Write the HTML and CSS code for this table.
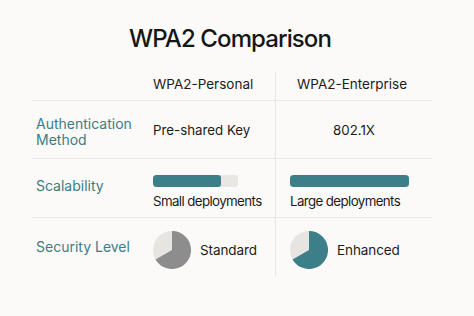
FILE: index.html
```html
<!DOCTYPE html>
<html>
<head>
<meta charset="utf-8">
<link rel="stylesheet" href="styles.css">
</head>
<body>
<div class="page">
  <h1 class="title">WPA2 Comparison</h1>
  <div class="table">
    <div class="cell head label"></div>
    <div class="cell head c1">WPA2-Personal</div>
    <div class="cell head c2 center">WPA2-Enterprise</div>

    <div class="cell row label"><span>Authentication<br>Method</span></div>
    <div class="cell row c1 auth">Pre-shared Key</div>
    <div class="cell row c2 center auth">802.1X</div>

    <div class="cell row label scal-label">Scalability</div>
    <div class="cell row c1 scal">
      <div class="bar small"><div class="fill" style="width:80%"></div></div>
      <div class="cap">Small deployments</div>
    </div>
    <div class="cell row c2 scal ent">
      <div class="bar large"><div class="fill" style="width:100%"></div></div>
      <div class="cap">Large deployments</div>
    </div>

    <div class="cell last label sec-label">Security Level</div>
    <div class="cell last c1 sec">
      <svg class="pie" viewBox="0 0 38 38" width="38" height="38">
        <circle cx="19" cy="19" r="19" fill="#e6e5e2"/>
        <path d="M19 19 L19 0 A19 19 0 1 1 2.55 28.5 Z" fill="#8d8d8d"/>
      </svg>
      <span>Standard</span>
    </div>
    <div class="cell last c2 sec ent">
      <svg class="pie" viewBox="0 0 38 38" width="38" height="38">
        <circle cx="19" cy="19" r="19" fill="#e6e5e2"/>
        <path d="M19 19 L19 0 A19 19 0 1 1 2.55 28.5 Z" fill="#3d7f89"/>
      </svg>
      <span>Enhanced</span>
    </div>
  </div>
</div>
</body>
</html>
```

FILE: styles.css
```css
html, body {
  margin: 0;
  padding: 0;
  background: #fbfaf8;
}
body {
  width: 474px;
  height: 316px;
  overflow: hidden;
  font-family: Inter, "Noto Sans", sans-serif;
  color: #1c1c1c;
}
.page {
  padding: 24px 0 0 32px;
  width: 400px;
}
.title {
  margin: 0;
  text-align: center;
  font-size: 24px;
  font-weight: 500;
  line-height: 30px;
  letter-spacing: -0.9px;
  padding-right: 4px;
  color: #161616;
}
.table {
  margin-top: 18px;
  display: grid;
  grid-template-columns: 113px 130px 157px;
  grid-template-rows: 29px 58px 59px 58px;
  font-size: 13.3px;
}
.cell {
  display: flex;
  align-items: center;
  border-bottom: 1px solid #ebe9e5;
}
.cell.last {
  border-bottom: none;
}
.c1 {
  padding-left: 8px;
}
.c2 {
  border-left: 1px solid #e8e6e2;
}
.center {
  justify-content: center;
}
.head {
  padding-bottom: 4px;
  font-size: 13.5px;
}
.head.c2 {
  padding-right: 4px;
}
.label {
  padding-left: 4px;
  color: #3c7c86;
  font-size: 14px;
  line-height: 16px;
}
.row.label span {
  padding-top: 5px;
}
.scal {
  flex-direction: column;
  align-items: flex-start;
  justify-content: flex-start;
  padding-top: 16px;
  gap: 6px;
}
.ent {
  padding-left: 14px;
}
.bar {
  flex: none;
  height: 12px;
  border-radius: 3px;
  background: #e8e7e4;
  overflow: hidden;
}
.bar.small {
  width: 85px;
}
.bar.large {
  width: 119px;
}
.fill {
  height: 100%;
  background: #3d7f89;
  border-radius: 3px;
}
.cap {
  line-height: 16px;
  white-space: nowrap;
  letter-spacing: -0.6px;
}
.scal-label {
  padding-bottom: 4px;
}
.sec {
  gap: 9px;
  padding-top: 6px;
}
.sec span {
  font-size: 13.5px;
  letter-spacing: -0.1px;
}
.pie {
  display: block;
  flex: none;
}
```
